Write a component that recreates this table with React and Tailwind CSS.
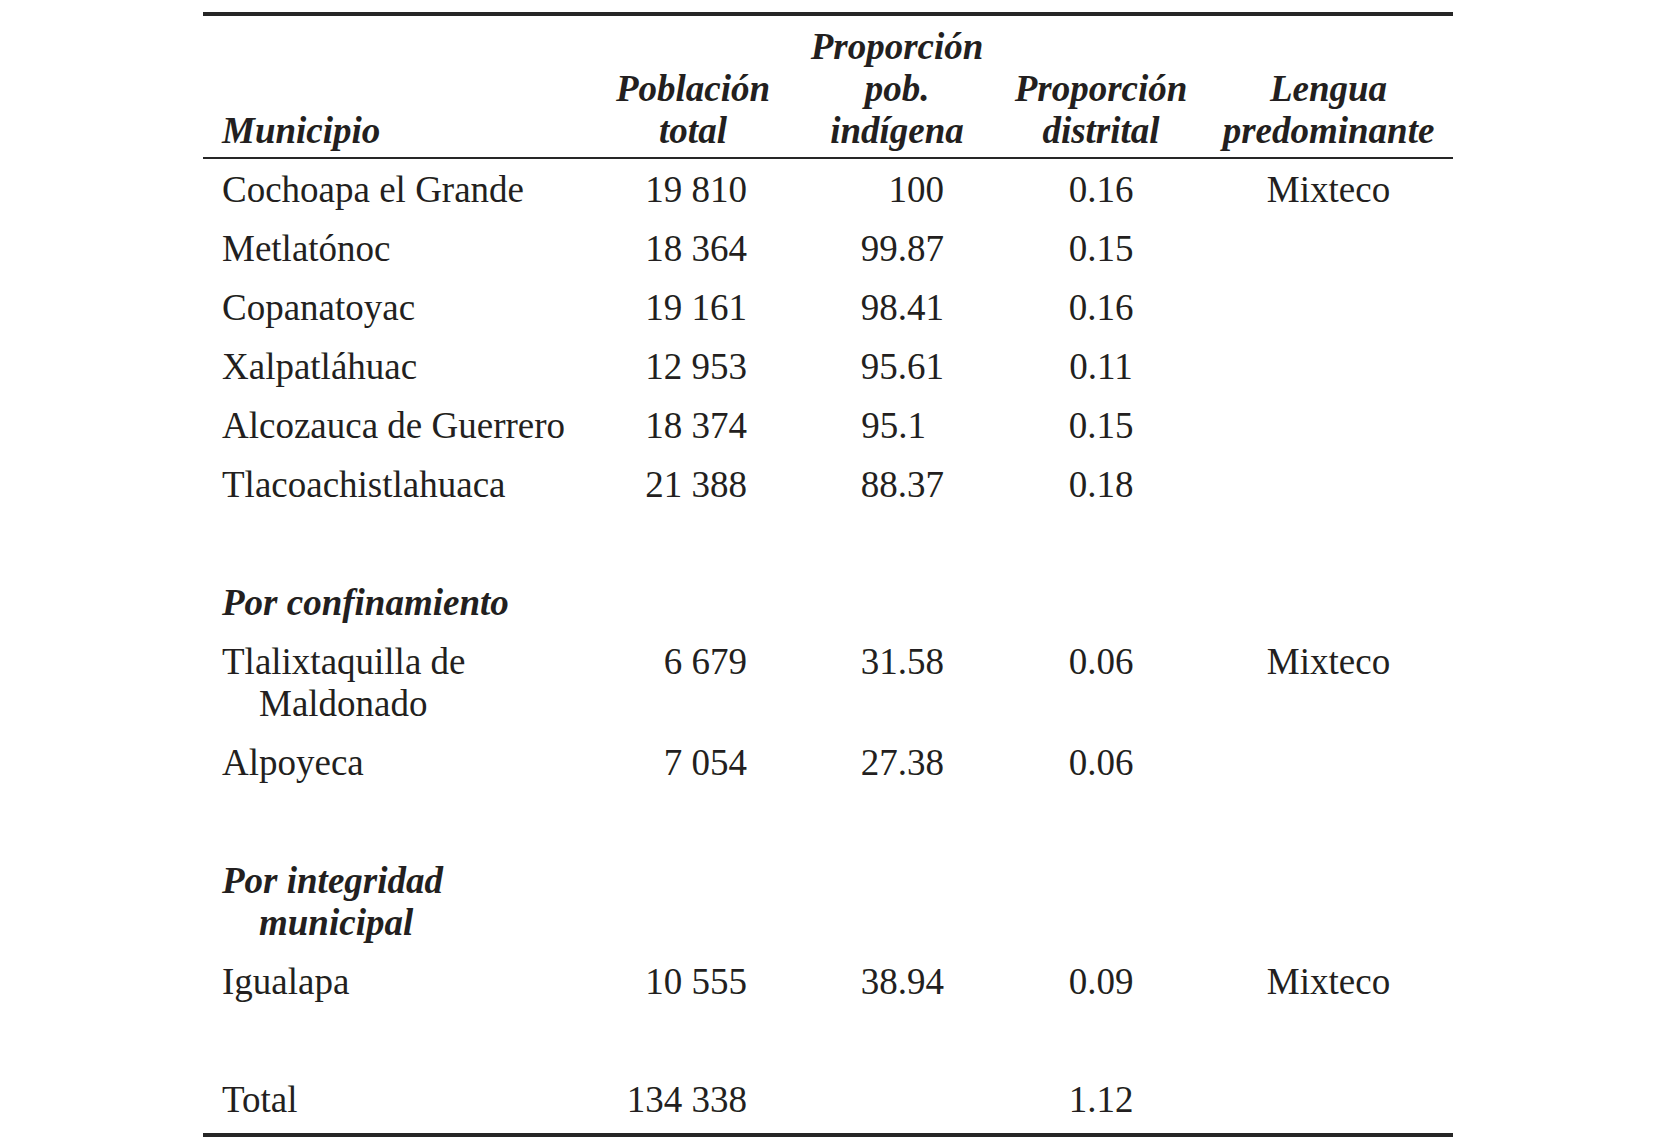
const rows = [
  { name: "Cochoapa el Grande", pob: "19 810", prop: "100", dist: "0.16", lengua: "Mixteco" },
  { name: "Metlatónoc", pob: "18 364", prop: "99.87", dist: "0.15" },
  { name: "Copanatoyac", pob: "19 161", prop: "98.41", dist: "0.16" },
  { name: "Xalpatláhuac", pob: "12 953", prop: "95.61", dist: "0.11" },
  { name: "Alcozauca de Guerrero", pob: "18 374", prop: "95.1", dist: "0.15", short: true },
  { name: "Tlacoachistlahuaca", pob: "21 388", prop: "88.37", dist: "0.18" },
  { blank: true },
  { section: "Por confinamiento" },
  { name: "Tlalixtaquilla de Maldonado", pob: "6 679", prop: "31.58", dist: "0.06", lengua: "Mixteco" },
  { name: "Alpoyeca", pob: "7 054", prop: "27.38", dist: "0.06" },
  { blank: true },
  { section: "Por integridad municipal" },
  { name: "Igualapa", pob: "10 555", prop: "38.94", dist: "0.09", lengua: "Mixteco" },
  { blank: true },
];

function HeadCell({ children, align = "text-center", pad = "" }) {
  return (
    <th
      className={`${align} ${pad} align-bottom font-bold italic pt-[10px] pb-[5px] border-b-2 border-[#262626]`}
    >
      {children}
    </th>
  );
}

export default function App() {
  return (
    <div className="min-h-screen bg-white text-[#231f20] [font-family:'Liberation_Serif','Times_New_Roman',serif] text-[37px] leading-[42px]">
      <div className="w-[1250px] ml-[203px] pt-[12px]">
        <div className="border-t-4 border-b-4 border-[#262626]">
          <table className="w-full table-fixed border-separate border-spacing-0">
            <colgroup>
              <col className="w-[387px]" />
              <col className="w-[206px]" />
              <col className="w-[202px]" />
              <col className="w-[206px]" />
              <col className="w-[249px]" />
            </colgroup>
            <thead>
              <tr>
                <HeadCell align="text-left" pad="pl-[19px]">
                  Municipio
                </HeadCell>
                <HeadCell>
                  Población
                  <br />
                  total
                </HeadCell>
                <HeadCell>
                  Proporción
                  <br />
                  pob.
                  <br />
                  indígena
                </HeadCell>
                <HeadCell>
                  Proporción
                  <br />
                  distrital
                </HeadCell>
                <HeadCell>
                  Lengua
                  <br />
                  predominante
                </HeadCell>
              </tr>
            </thead>
            <tbody>
              {rows.map((r, i) => {
                if (r.blank) {
                  return (
                    <tr key={i}>
                      <td colSpan={5} className="h-[59px] p-0"></td>
                    </tr>
                  );
                }
                if (r.section) {
                  return (
                    <tr key={i}>
                      <td className="pt-[10px] pb-[7px] pl-[56px] -indent-[37px] font-bold italic align-top">
                        {r.section}
                      </td>
                      <td colSpan={4}></td>
                    </tr>
                  );
                }
                return (
                  <tr key={i}>
                    <td className="pt-[10px] pb-[7px] pl-[56px] -indent-[37px] align-top">
                      {r.name}
                    </td>
                    <td className="pt-[10px] pb-[7px] pr-[49px] text-right align-top">
                      {r.pob}
                    </td>
                    <td
                      className={`pt-[10px] pb-[7px] text-right align-top ${
                        r.short ? "pr-[72px]" : "pr-[54px]"
                      }`}
                    >
                      {r.prop}
                    </td>
                    <td className="pt-[10px] pb-[7px] text-center align-top">
                      {r.dist}
                    </td>
                    <td className="pt-[10px] pb-[7px] text-center align-top">
                      {r.lengua || ""}
                    </td>
                  </tr>
                );
              })}
              <tr>
                <td className="pt-[10px] pb-[12px] pl-[19px] align-top">Total</td>
                <td className="pt-[10px] pb-[12px] pr-[49px] text-right align-top">
                  134 338
                </td>
                <td></td>
                <td className="pt-[10px] pb-[12px] text-center align-top">1.12</td>
                <td></td>
              </tr>
            </tbody>
          </table>
        </div>
      </div>
    </div>
  );
}
